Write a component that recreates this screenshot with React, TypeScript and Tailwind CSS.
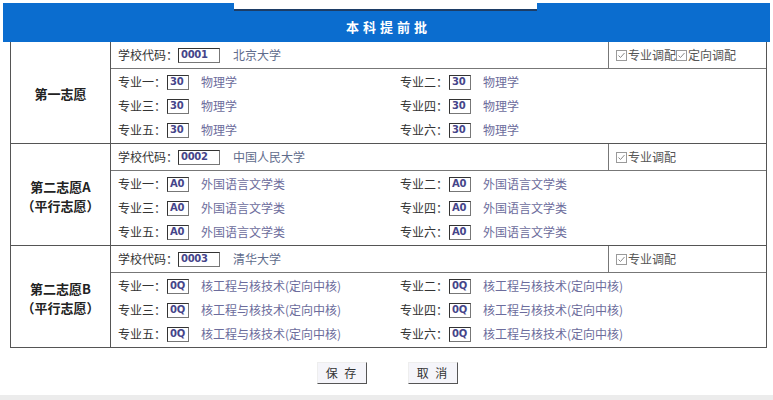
import React from "react"

type Section = {
  title: React.ReactNode
  code: string
  school: string
  value: string
  major: string
  checks: string[]
}

const sections: Section[] = [
  {
    title: <span>第一志愿</span>,
    code: "0001",
    school: "北京大学",
    value: "30",
    major: "物理学",
    checks: ["专业调配", "定向调配"],
  },
  {
    title: (
      <>
        <span>第二志愿A</span>
        <span>（平行志愿）</span>
      </>
    ),
    code: "0002",
    school: "中国人民大学",
    value: "A0",
    major: "外国语言文学类",
    checks: ["专业调配"],
  },
  {
    title: (
      <>
        <span>第二志愿B</span>
        <span>（平行志愿）</span>
      </>
    ),
    code: "0003",
    school: "清华大学",
    value: "0Q",
    major: "核工程与核技术(定向中核)",
    checks: ["专业调配"],
  },
]

const nums = ["一", "二", "三", "四", "五", "六"]

function Box({ value, wide }: { value: string; wide?: boolean }) {
  return (
    <span
      className={`inline-flex shrink-0 items-center h-[15px] ${wide ? "w-[42px]" : "w-[22px]"} border border-[#777] border-t-[#333] border-l-[#333] bg-white pl-[2px] text-[10px] font-bold text-[#45458a] font-['DejaVu_Sans',sans-serif] tracking-[-0.3px]`}
    >
      {value}
    </span>
  )
}

function Check({ label }: { label: string }) {
  return (
    <span className="inline-flex items-center whitespace-nowrap">
      <svg width="11" height="11" viewBox="0 0 11 11" className="mr-[1px] shrink-0">
        <rect x="0.5" y="0.5" width="10" height="10" fill="#fff" stroke="#9a9a9a" />
        <path d="M2.5 5.5 L4.5 7.5 L8.5 3" fill="none" stroke="#8a8a8a" strokeWidth="1" />
      </svg>
      <span className="text-[#555]">{label}</span>
    </span>
  )
}

function Major({ n, value, major }: { n: number; value: string; major: string }) {
  return (
    <div className="flex items-center h-[24px] whitespace-nowrap">
      <span className="w-[49px] shrink-0 text-[#333]">专业{nums[n]}：</span>
      <Box value={value} />
      <span className="ml-[12px] text-[#6c6c9c]">{major}</span>
    </div>
  )
}

export default function App() {
  return (
    <div className="w-[773px] h-[400px] bg-white overflow-hidden text-[12px] leading-none font-['Noto_Sans_CJK_SC',sans-serif]">
      {/* header band with tab cut */}
      <div className="pt-[3px] px-[3px]">
        <div className="flex h-[8px]">
          <div className="w-[231px] bg-[#0b6dcf]" />
          <div className="w-[303px] bg-white border-b-2 border-[#1d3d66] -mt-[3px] h-[11px]" />
          <div className="flex-1 bg-[#0b6dcf]" />
        </div>
        <div className="h-[31px] bg-[#0b6dcf] flex items-center justify-center">
          <span className="text-white font-bold text-[13px] tracking-[4px] pl-[4px]">本科提前批</span>
        </div>
      </div>

      {/* form table */}
      <div className="ml-[10px] w-[757px] border-x border-b border-[#555]">
        {sections.map((s, i) => (
          <div key={i} className={`flex ${i < sections.length - 1 ? "border-b border-[#555]" : ""}`}>
            <div className="w-[100px] shrink-0 border-r border-[#555] flex flex-col items-center justify-center gap-[6px] font-bold text-[13px] text-[#222] pt-[2px]">
              {s.title}
            </div>
            <div className="flex-1">
              <div className="flex h-[27px] border-b border-[#777]">
                <div className="flex-1 flex items-center pl-[7px] whitespace-nowrap">
                  <span className="text-[#333] w-[60px] shrink-0">学校代码：</span>
                  <Box value={s.code} wide />
                  <span className="ml-[13px] text-[#5f6c8c]">{s.school}</span>
                </div>
                <div className="w-[158px] border-l border-[#777] flex items-center pl-[7px]">
                  {s.checks.map((c) => (
                    <Check key={c} label={c} />
                  ))}
                </div>
              </div>
              <div className="grid grid-cols-[282px_1fr] pl-[7px] py-[1px]">
                {[0, 1, 2, 3, 4, 5].map((n) => (
                  <Major key={n} n={n} value={s.value} major={s.major} />
                ))}
              </div>
            </div>
          </div>
        ))}
      </div>

      {/* buttons */}
      <div className="flex justify-center gap-[41px] mt-[14px] pl-[2px]">
        {["保 存", "取 消"].map((b) => (
          <button
            key={b}
            className="w-[50px] h-[22px] bg-[#f5f5fa] border border-t-[#eee] border-l-[#eee] border-b-[#555] border-r-[#555] text-[12px] text-[#333] tracking-[2px] flex items-center justify-center"
          >
            {b}
          </button>
        ))}
      </div>

      <div className="mt-[11px] h-[6px] bg-[#ececec]" />
    </div>
  )
}
